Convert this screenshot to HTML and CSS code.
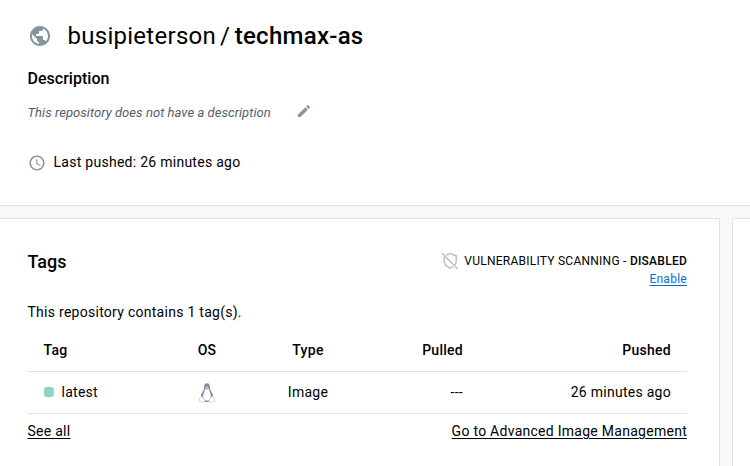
FILE: index.html
```html
<!DOCTYPE html>
<html lang="en">
<head>
<meta charset="utf-8">
<title>busipieterson/techmax-as</title>
<link rel="stylesheet" href="styles.css">
</head>
<body>
<header class="repo">
  <div class="repo-title">
    <svg class="globe" viewBox="0 0 24 24"><path d="M12 2C6.48 2 2 6.48 2 12s4.48 10 10 10 10-4.48 10-10S17.52 2 12 2zm-1 17.93c-3.95-.49-7-3.85-7-7.93 0-.62.08-1.21.21-1.79L9 15v1c0 1.1.9 2 2 2v1.93zm6.9-2.54c-.26-.81-1-1.39-1.9-1.39h-1v-3c0-.55-.45-1-1-1H8v-2h2c.55 0 1-.45 1-1V7h2c1.1 0 2-.9 2-2v-.41c2.93 1.19 5 4.06 5 7.41 0 2.08-.8 3.97-2.1 5.39z"/></svg>
    <h1><span class="owner">busipieterson</span><span class="slash">/</span><span class="name">techmax-as</span></h1>
  </div>
  <h2 class="desc-heading">Description</h2>
  <div class="desc">
    <em>This repository does not have a description</em>
    <svg class="pencil" viewBox="0 0 24 24"><path d="M3 17.25V21h3.75L17.81 9.94l-3.75-3.75L3 17.25zM20.71 7.04c.39-.39.39-1.02 0-1.41l-2.34-2.34c-.39-.39-1.02-.39-1.41 0l-1.83 1.83 3.75 3.75 1.83-1.83z"/></svg>
  </div>
  <div class="last-pushed">
    <svg class="clock" viewBox="0 0 24 24"><path d="M11.99 2C6.47 2 2 6.48 2 12s4.47 10 9.99 10C17.52 22 22 17.52 22 12S17.52 2 11.99 2zM12 20c-4.42 0-8-3.58-8-8s3.58-8 8-8 8 3.58 8 8-3.58 8-8 8zm.5-13H11v6l5.25 3.15.75-1.23-4.5-2.67z"/></svg>
    <span>Last pushed: 26 minutes ago</span>
  </div>
</header>
<main class="panels">
  <section class="card tags">
    <div class="tags-head">
      <h2>Tags</h2>
      <div class="scan">
        <div class="scan-status">
          <svg class="shield" viewBox="0 0 18 18"><path d="M5.2 3.3 9 1.6l6.3 2.3v4.6c0 1.7-.5 3.1-1.4 4.4M3.2 5v3.6c0 3.5 2.3 6.2 6 7.4 1.1-.4 2-.8 2.8-1.4M1 1.3l15.6 15.5"/></svg>
          <span>VULNERABILITY SCANNING - <b>DISABLED</b></span>
        </div>
        <a class="enable" href="#">Enable</a>
      </div>
    </div>
    <p class="count">This repository contains 1 tag(s).</p>
    <div class="row head">
      <span>Tag</span><span class="mid">OS</span><span class="mid">Type</span><span class="end">Pulled</span><span class="end">Pushed</span>
    </div>
    <div class="row body">
      <span class="tag"><i class="dot"></i>latest</span>
      <span class="mid os"><svg class="linux" viewBox="0 0 16 20"><path class="coat" d="M8 .3c-2.1 0-3 1.4-2.9 3.4.1 2.4-.4 3.2-1.5 5C2.4 10.7 1.5 12.5 2.1 14.5L5 19h6l2.9-4.5c.6-2-.3-3.8-1.5-5.8-1.1-1.8-1.6-2.6-1.5-5C11 1.700 10.100.3 8 .3z"/><path class="belly" d="M6.3 5.6 8 6.8l1.7-1.2c.3 2.5 1.9 4.6 2.1 7.4.1 2.3-1.6 4.6-3.8 4.6s-3.900-2.300-3.800-4.600c.2-2.800 1.800-4.900 2.100-7.400z"/><path class="foot" d="M2.8 13.6.5 15v3l3.8 1.5 1.9-1.3c-.7-1.8-1.9-3.6-3.4-4.600zM13.200 13.600l2.300 1.400v3l-3.800 1.500-1.900-1.300c.1-1.800 1.900-3.600 3.400-4.600z"/><path class="beak" d="M6.4 4.4 8 3.8l1.600.6L8 5.800z"/></svg></span>
      <span class="mid">Image</span><span class="end">---</span><span class="end">26 minutes ago</span>
    </div>
    <div class="links"><a href="#">See all</a><a href="#">Go to Advanced Image Management</a></div>
  </section>
  <aside class="card side"></aside>
</main>
</body>
</html>
```

FILE: styles.css
```css
* { box-sizing: border-box; }
body {
  margin: 0;
  height: 466px;
  overflow: hidden;
  background: #f9f9f9;
  color: #000;
  font: 14px/20px Roboto, "Liberation Sans", sans-serif;
  letter-spacing: 0.27px;
}
svg { display: block; flex: none; }
h1, h2, p { margin: 0; }
a { color: inherit; text-underline-offset: 2px; }
.repo {
  height: 206px;
  padding: 20px 28px 0 27.5px;
  background: #fff;
  border-bottom: 1px solid #e1e2e6;
}
.repo-title { display: flex; align-items: center; height: 32px; }
.globe { width: 24px; height: 24px; margin-left: 0.5px; fill: #8393a0; }
h1 {
  margin-left: 15.5px;
  font-size: 24px;
  line-height: 32px;
  font-weight: 400;
  letter-spacing: 0.27px;
}
.slash { margin: 0 4.5px 0 4px; }
.name { font-weight: 500; }
.desc-heading {
  margin-top: 17px;
  font-size: 16px;
  line-height: 20px;
  font-weight: 500;
  letter-spacing: 0.02px;
}
.desc {
  display: flex;
  align-items: center;
  height: 24px;
  margin-top: 12px;
  color: #556068;
  font-size: 13px;
  letter-spacing: 0.05px;
}
.pencil { width: 16px; height: 16px; margin: -4px 0 0 25.5px; fill: #8993a8; }
.last-pushed { display: flex; align-items: center; margin-top: 27px; }
.clock { width: 18px; height: 18px; margin: 2px 7.5px 0 0.5px; fill: #8393a0; }
.panels { display: flex; gap: 12px; height: 260px; padding-top: 12px; }
.card { height: 270px; background: #fff; border: 1px solid #e1e2e6; border-radius: 2px; }
.tags { width: 720px; padding: 32px 32px 0 27.5px; border-left: 0; border-radius: 0 2px 0 0; }
.side { flex: 1; border-right: 0; border-radius: 2px 0 0; }
.tags-head { display: flex; justify-content: space-between; height: 51px; }
.tags-head h2 { font-size: 18px; line-height: 22px; font-weight: 500; letter-spacing: 0; }
.scan { font-size: 12px; line-height: 18px; text-align: right; }
.scan-status { display: flex; align-items: center; height: 19px; }
.scan-status span { letter-spacing: 0.25px; }
.scan-status b { font-weight: 500; }
.shield { width: 18px; height: 18px; margin-right: 5px; fill: none; stroke: #c1c1c1; stroke-width: 1.6; }
.enable { color: #086dd7; }
.count { line-height: 20px; }
.row {
  display: grid;
  grid-template-columns: 144.5px 70px 132px 105px 208px;
  align-items: center;
  border-bottom: 1px solid #e1e2e2;
}
.head { height: 50px; padding-top: 7px; font-weight: 500; }
.body { height: 42px; padding-bottom: 2px; }
.row > :first-child { padding-left: 16px; }
.mid { text-align: center; }
.end { text-align: right; padding-right: 16px; }
.tag { display: flex; align-items: center; }
.dot { width: 10px; height: 10px; margin: 1px 7.5px 0 0.5px; border-radius: 3px; background: #8bd6c0; }
.os { display: flex; justify-content: center; }
.linux { width: 16px; height: 20px; margin-top: 2px; }
.coat { fill: #8393a0; }
.belly { fill: #fff; }
.foot { fill: #fff; stroke: #c6ced3; stroke-width: 0.8; }
.beak { fill: #dce2e5; }
.links { display: flex; justify-content: space-between; margin-top: 7px; }
```
